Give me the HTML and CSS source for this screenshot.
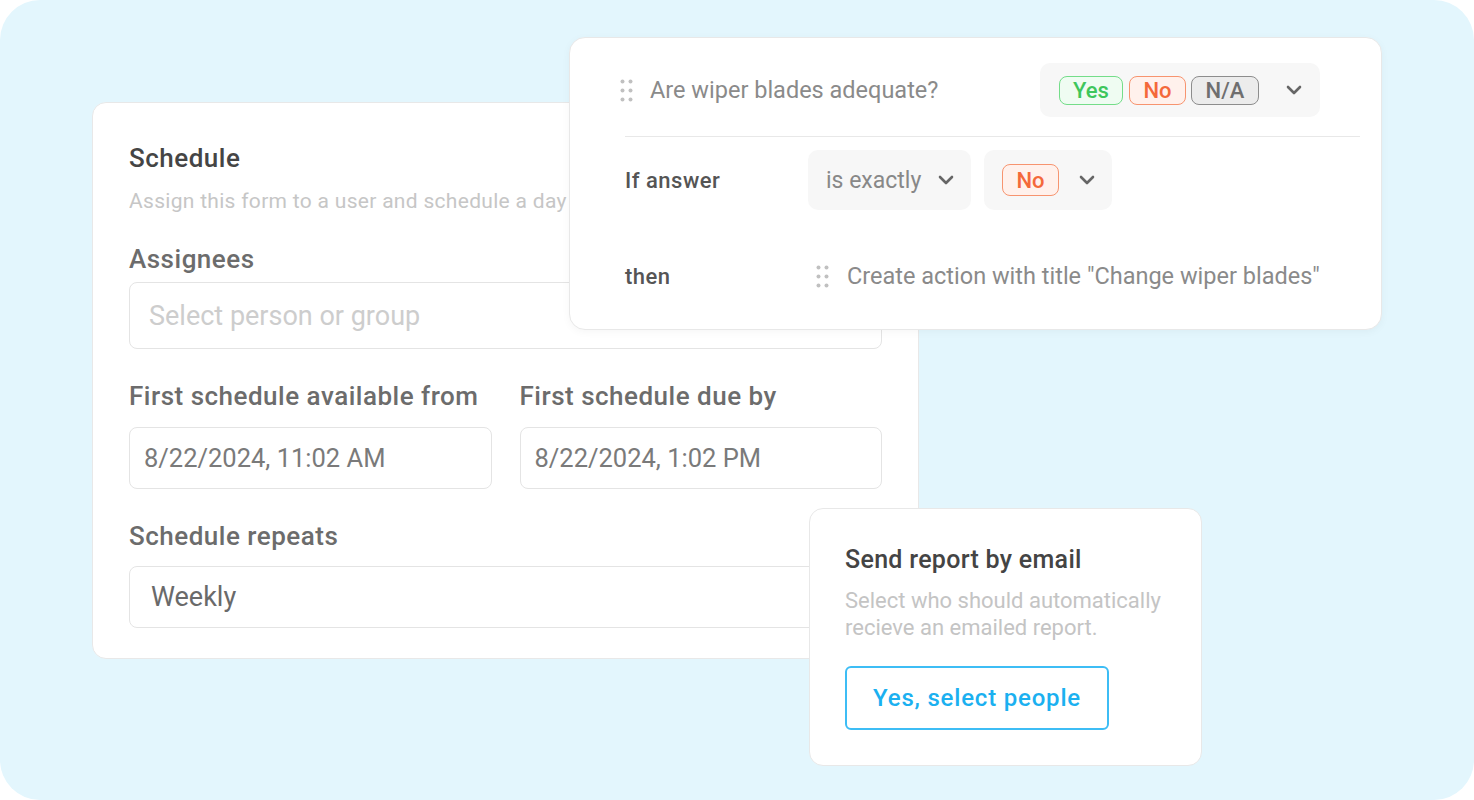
FILE: index.html
```html
<!DOCTYPE html>
<html lang="en">
<head>
    <meta charset="UTF-8">
    <title>Schedule and rules</title>
    <link rel="stylesheet" href="styles.css">
</head>
<body>
    <div class="frame">
        <!-- Schedule form -->
        <section class="card schedule">
            <h2 class="card-title">Schedule</h2>
            <p class="card-desc">Assign this form to a user and schedule a day and time for it to be completed.</p>

            <label class="field-label label-assignees">Assignees</label>
            <div class="input input-assignees">Select person or group</div>

            <div class="date-row">
                <div>
                    <label class="field-label label-date">First schedule available from</label>
                    <div class="input input-date">8/22/2024, 11:02 AM</div>
                </div>
                <div>
                    <label class="field-label label-date">First schedule due by</label>
                    <div class="input input-date">8/22/2024, 1:02 PM</div>
                </div>
            </div>

            <label class="field-label label-repeats">Schedule repeats</label>
            <div class="input input-weekly">Weekly</div>
        </section>

        <!-- Logic rule -->
        <section class="card rules">
            <div class="question-row">
                <div class="question">
                    <svg class="drag" width="13" height="23" viewBox="0 0 13 23">
                        <circle cx="2.5" cy="2.5" r="2"/><circle cx="10.5" cy="2.5" r="2"/>
                        <circle cx="2.5" cy="11.5" r="2"/><circle cx="10.5" cy="11.5" r="2"/>
                        <circle cx="2.5" cy="20.5" r="2"/><circle cx="10.5" cy="20.5" r="2"/>
                    </svg>
                    <span>Are wiper blades adequate?</span>
                </div>
                <div class="select select-answers">
                    <span class="pill pill-yes">Yes</span>
                    <span class="pill pill-no">No</span>
                    <span class="pill pill-na">N/A</span>
                    <svg class="chevron" width="16" height="10" viewBox="0 0 16 10"><path d="M2 2 L8 8 L14 2"/></svg>
                </div>
            </div>

            <div class="divider"></div>

            <div class="rule-row rule-if">
                <span class="rule-label">If answer</span>
                <div class="rule-content">
                    <div class="select select-op">
                        <span>is exactly</span>
                        <svg class="chevron" width="16" height="10" viewBox="0 0 16 10"><path d="M2 2 L8 8 L14 2"/></svg>
                    </div>
                    <div class="select select-value">
                        <span class="pill pill-no pill-lg">No</span>
                        <svg class="chevron" width="16" height="10" viewBox="0 0 16 10"><path d="M2 2 L8 8 L14 2"/></svg>
                    </div>
                </div>
            </div>

            <div class="rule-row rule-then">
                <span class="rule-label">then</span>
                <div class="rule-content action">
                    <svg class="drag" width="13" height="23" viewBox="0 0 13 23">
                        <circle cx="2.5" cy="2.5" r="2"/><circle cx="10.5" cy="2.5" r="2"/>
                        <circle cx="2.5" cy="11.5" r="2"/><circle cx="10.5" cy="11.5" r="2"/>
                        <circle cx="2.5" cy="20.5" r="2"/><circle cx="10.5" cy="20.5" r="2"/>
                    </svg>
                    <span>Create action with title "Change wiper blades"</span>
                </div>
            </div>
        </section>

        <!-- Email report -->
        <section class="card email">
            <h3 class="email-title">Send report by email</h3>
            <p class="email-desc">Select who should automatically<br>recieve an emailed report.</p>
            <button class="btn-outline">Yes, select people</button>
        </section>
    </div>
</body>
</html>
```

FILE: styles.css
```css
body {
    margin: 0;
    background: #fff;
    font-family: Roboto, "Liberation Sans", sans-serif;
}

.frame {
    position: relative;
    width: 1474px;
    height: 800px;
    box-sizing: border-box;
    padding: 102px 0 0 92px;
    background: #e3f6fd;
    border-radius: 40px;
    overflow: hidden;
}

.card {
    background: #fff;
    border: 1px solid #e8e8e8;
    box-sizing: border-box;
}

/* schedule card */
.schedule {
    width: 827px;
    padding: 40px 36px 30px 36px;
    border-radius: 14px;
    overflow: hidden;
}

.card-title {
    margin: 0;
    font-size: 26px;
    line-height: 30px;
    font-weight: 500;
    letter-spacing: 0.5px;
    color: #454545;
}

/* cut where the rules card starts */
.card-desc {
    width: 440px;
    margin: 14px 0 0;
    font-size: 21px;
    line-height: 28px;
    letter-spacing: 0.3px;
    color: #c6c6c6;
    white-space: nowrap;
    overflow: hidden;
}

.field-label {
    display: block;
    font-size: 26px;
    line-height: 30px;
    font-weight: 500;
    letter-spacing: 0.5px;
    color: #6c6c6c;
}

.label-assignees {
    margin: 29px 0 8px;
}

.label-date {
    margin: 0 0 16px;
}

.label-repeats {
    margin: 32px 0 15px;
}

.input {
    box-sizing: border-box;
    height: 62px;
    display: flex;
    align-items: center;
    border: 1px solid #e4e4e4;
    border-radius: 8px;
    font-size: 25.5px;
    color: #7a7a7a;
}

.input-assignees {
    height: 67px;
    padding-left: 19px;
    font-size: 27px;
    color: #cdcdcd;
}

.input-date {
    padding-left: 14px;
}

.input-weekly {
    padding-left: 21px;
    font-size: 27px;
    color: #6a6a6a;
}

.date-row {
    display: grid;
    grid-template-columns: 1fr 1fr;
    gap: 28px;
    margin-top: 32px;
}

/* rules card */
.rules {
    position: absolute;
    left: 569px;
    top: 37px;
    width: 813px;
    padding: 25px 21px 38px 55px;
    border-radius: 16px;
    box-shadow: 0 2px 8px rgba(0, 0, 0, 0.04);
}

.question-row {
    display: flex;
    justify-content: space-between;
    align-items: center;
    margin-left: -5px;
    padding-right: 40px;
}

.question {
    display: flex;
    align-items: center;
    gap: 17px;
    font-size: 23.5px;
    color: #8a8a8a;
}

.drag {
    fill: #c0c0c0;
    flex: none;
}

.select {
    display: flex;
    align-items: center;
    box-sizing: border-box;
    background: #f7f7f7;
    border-radius: 10px;
}

.select-answers {
    width: 280px;
    height: 54px;
    padding: 0 18px 0 19px;
    gap: 5px;
}

.select-answers .chevron {
    margin-left: auto;
}

.chevron {
    flex: none;
    fill: none;
    stroke: #666;
    stroke-width: 2.6;
    stroke-linecap: round;
    stroke-linejoin: round;
}

.pill {
    box-sizing: border-box;
    height: 29px;
    display: inline-flex;
    align-items: center;
    justify-content: center;
    border: 1.5px solid;
    border-radius: 8px;
    font-size: 22px;
    font-weight: 500;
}

.pill-yes {
    width: 64px;
    margin-right: 1px;
    color: #3ec65c;
    border-color: #74dd89;
    background: #effcf2;
}

.pill-no {
    width: 57px;
    color: #f4693a;
    border-color: #f7946f;
    background: #fff1ec;
}

.pill-na {
    width: 68px;
    color: #6f6f6f;
    border-color: #8d8d8d;
    background: #ececec;
}

.pill-lg {
    height: 32px;
}

.divider {
    height: 1px;
    margin-top: 19px;
    background: #e8e8e8;
}

.rule-row {
    display: grid;
    grid-template-columns: 183px 1fr;
    align-items: center;
}

.rule-if {
    margin-top: 13px;
}

.rule-then {
    margin-top: 51px;
    height: 30px;
}

.rule-label {
    font-size: 22px;
    font-weight: 500;
    letter-spacing: 0.5px;
    color: #555;
}

.rule-content {
    display: flex;
    align-items: center;
    gap: 13px;
}

.select-op,
.select-value {
    height: 60px;
    padding: 0 17px 0 18px;
    font-size: 23px;
    color: #888;
}

.select-op {
    width: 163px;
    justify-content: space-between;
}

.select-value {
    width: 128px;
    justify-content: space-between;
}

.action {
    padding-left: 8px;
    gap: 18px;
    font-size: 23.5px;
    color: #8a8a8a;
}

/* email card */
.email {
    position: absolute;
    left: 809px;
    top: 508px;
    width: 393px;
    padding: 36px 30px 35px 35px;
    border-radius: 14px;
}

.email-title {
    margin: 0;
    font-size: 25px;
    line-height: 30px;
    font-weight: 500;
    letter-spacing: 0.3px;
    color: #444;
}

.email-desc {
    margin: 12px 0 0;
    font-size: 22px;
    line-height: 27px;
    color: #c4c4c4;
}

.btn-outline {
    display: block;
    box-sizing: border-box;
    width: 264px;
    height: 64px;
    margin-top: 25px;
    background: #fff;
    border: 2px solid #3dbdf5;
    border-radius: 6px;
    font-family: inherit;
    font-size: 24px;
    font-weight: 500;
    letter-spacing: 0.8px;
    color: #1bb0f0;
}
```
